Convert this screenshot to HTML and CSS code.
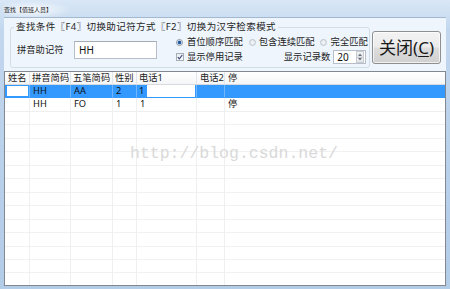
FILE: index.html
```html
<!DOCTYPE html>
<html lang="zh-CN">
<head>
<meta charset="utf-8">
<title>查找【值班人员】</title>
<link rel="stylesheet" href="styles.css">
</head>
<body>
<div class="window">
  <div class="titlebar"><span class="title">查找【值班人员】</span></div>
  <div class="client">
    <div class="top">
      <fieldset class="group">
        <legend>查找条件〖F4〗切换助记符方式〖F2〗切换为汉字检索模式</legend>
        <div class="group-body">
          <span class="lbl">拼音助记符</span>
          <div class="textbox">HH</div>
          <div class="options">
            <div class="opt-row">
              <span class="radio on"></span><span class="txt t1">首位顺序匹配</span>
              <span class="radio r2"></span><span class="txt t2">包含连续匹配</span>
              <span class="radio r3"></span><span class="txt t3">完全匹配</span>
            </div>
            <div class="opt-row">
              <span class="check"><svg width="6" height="6" viewBox="0 0 6 6"><polyline points="0.8,3.2 2.3,4.8 5.3,1" fill="none" stroke="#34467a" stroke-width="1.1"/></svg></span><span class="txt t1">显示停用记录</span>
              <span class="txt count-lbl">显示记录数</span>
              <div class="spin">
                <span class="spin-val">20</span>
                <div class="spin-btns">
                  <span class="sb"><svg width="4" height="3" viewBox="0 0 4 3"><polygon points="0,3 2,0.5 4,3" fill="#6b7582"/></svg></span>
                  <span class="sb"><svg width="4" height="3" viewBox="0 0 4 3"><polygon points="0,0 4,0 2,2.5" fill="#6b7582"/></svg></span>
                </div>
              </div>
            </div>
          </div>
        </div>
      </fieldset>
      <button class="close">关闭(<u>C</u>)</button>
    </div>
    <div class="grid">
      <div class="row head">
        <span class="c">姓名</span><span class="c">拼音简码</span><span class="c">五笔简码</span><span class="c">性别</span><span class="c">电话1</span><span class="c">电话2</span><span class="c last">停</span>
      </div>
      <div class="row sel">
        <span class="c"><span class="editor e1"></span></span><span class="c">HH</span><span class="c">AA</span><span class="c">2</span><span class="c ed">1<span class="editor e2"></span></span><span class="c"></span><span class="c last"></span>
      </div>
      <div class="row">
        <span class="c"></span><span class="c">HH</span><span class="c">FO</span><span class="c">1</span><span class="c">1</span><span class="c"></span><span class="c last">停</span>
      </div>
      <div class="row filler">
        <span class="c"></span><span class="c"></span><span class="c"></span><span class="c"></span><span class="c"></span><span class="c"></span><span class="c last"></span>
      </div>
      <div class="watermark">http://blog.csdn.net/</div>
    </div>
  </div>
</div>
</body>
</html>
```

FILE: styles.css
```css
html, body {
  margin: 0;
  padding: 0;
}

body {
  width: 450px;
  height: 289px;
  overflow: hidden;
  font-family: "Noto Sans", "Noto Sans CJK SC", sans-serif;
  font-size: 9.3px;
  color: #1e1e1e;
}

.window {
  width: 450px;
  height: 289px;
  box-sizing: border-box;
  padding: 0 4px 3px 4px;
  background: linear-gradient(#d9e7f6, #c2d7ee 30px, #b7cfea 200px, #b3cce8);
  display: flex;
  flex-direction: column;
}

.titlebar {
  height: 17px;
  flex: none;
  display: flex;
  align-items: center;
  padding-top: 3px;
  box-sizing: border-box;
  background: radial-gradient(ellipse 40px 9px at 28px 10px, rgba(255,255,255,0.85), rgba(255,255,255,0));
}

.title {
  font-size: 6px;
  line-height: 8px;
  color: #1a1a1a;
}

.client {
  flex: 1;
  display: flex;
  flex-direction: column;
  background: #eef5fc;
  border-top: 1px solid #a4b8cf;
  min-height: 0;
}

.top {
  display: flex;
  align-items: flex-start;
  padding-top: 3px;
  flex: none;
}

.group {
  margin: 0 0 0 6px;
  padding: 0;
  width: 360px;
  box-sizing: border-box;
  border: 1px solid #d3dde6;
  border-radius: 3px;
  min-width: 0;
}

.group legend {
  margin-left: 3px;
  padding: 0 2px;
  font-size: 9.5px;
  letter-spacing: 0.4px;
  line-height: 12px;
  color: #1e1e1e;
}

.group-body {
  display: flex;
  align-items: center;
  height: 28px;
  padding: 3px 0 3px 6px;
}

.lbl {
  width: 57px;
  flex: none;
  line-height: 12px;
}

.textbox {
  width: 83px;
  height: 18px;
  box-sizing: border-box;
  border: 1px solid #b6bfc9;
  border-top-color: #a3acb7;
  background: #fff;
  padding-left: 4px;
  font-size: 10px;
  line-height: 16px;
  color: #111;
  flex: none;
}

.options {
  margin-left: 19px;
  display: flex;
  flex-direction: column;
  gap: 2px;
}

.opt-row {
  display: flex;
  align-items: center;
  height: 12px;
  line-height: 12px;
}

.opt-row + .opt-row {
  height: 14px;
}

.radio {
  width: 7px;
  height: 7px;
  box-sizing: border-box;
  border-radius: 50%;
  border: 1px solid #bcc4cc;
  background: radial-gradient(circle, #f4f6f8, #dde2e7);
  flex: none;
  position: relative;
}

.radio.on {
  border-color: #8e99a6;
  background: radial-gradient(circle, #1d4f93 0, #2a66b0 1.6px, #e6eaee 2.2px);
}

.txt {
  white-space: nowrap;
  flex: none;
}

.t1 { margin-left: 4px; }
.r2 { margin-left: 6px; }
.t2 { margin-left: 3px; }
.r3 { margin-left: 5px; }
.t3 { margin-left: 4px; }

.check {
  width: 8px;
  height: 8px;
  box-sizing: border-box;
  border: 1px solid #a6aeb8;
  background: linear-gradient(#e9ecef, #fbfbfb);
  display: flex;
  align-items: center;
  justify-content: center;
  flex: none;
}

.check + .t1 {
  margin-left: 3px;
}

.count-lbl {
  margin-left: 41px;
}

.spin {
  margin-left: 3px;
  width: 33px;
  height: 14px;
  box-sizing: border-box;
  border: 1px solid #b6bfc9;
  background: #fff;
  display: flex;
  flex: none;
}

.spin-val {
  flex: 1;
  padding-left: 3px;
  font-size: 10px;
  line-height: 12px;
  color: #111;
}

.spin-btns {
  width: 8px;
  display: flex;
  flex-direction: column;
  margin: 0 1px 0 0;
}

.sb {
  flex: 1;
  display: flex;
  align-items: center;
  justify-content: center;
  background: linear-gradient(#f4f4f4, #e2e4e7);
  border: 1px solid #c8ccd2;
  box-sizing: border-box;
}

.sb + .sb {
  border-top: none;
}

.close {
  margin: 10px 0 0 2px;
  width: 69px;
  height: 33px;
  padding: 0;
  box-sizing: border-box;
  border: 1px solid #8f8f8f;
  border-radius: 3px;
  background: linear-gradient(#f3f3f3 0%, #ebebeb 48%, #dddddd 52%, #d0d0d0 100%);
  box-shadow: inset 0 0 0 1px rgba(255,255,255,0.7);
  font-family: "Noto Sans", "Noto Sans CJK SC", sans-serif;
  font-size: 17px;
  line-height: 31px;
  color: #1a1a1a;
  flex: none;
}

.close u {
  text-decoration-thickness: 1px;
  text-underline-offset: 2px;
}

.grid {
  flex: 1;
  margin-top: 3px;
  border: 1px solid #828790;
  background: #fff;
  display: flex;
  flex-direction: column;
  position: relative;
  overflow: hidden;
  min-height: 0;
}

.row {
  display: grid;
  grid-template-columns: 25px 41px 42px 24px 60px 28px 1fr;
  height: 13.45px;
  flex: none;
}

.c {
  box-sizing: border-box;
  border-right: 1px solid #efefef;
  border-bottom: 1px solid #efefef;
  padding-left: 3px;
  line-height: 12.5px;
  white-space: nowrap;
  overflow: hidden;
  color: #111;
}

.c.last {
  border-right: none;
}

.head {
  height: 13px;
  background: linear-gradient(#ffffff, #f4f5f7);
}

.head .c {
  border-right-color: #e3e5e8;
  border-bottom-color: #d6d9dd;
  padding-left: 2px;
  line-height: 12px;
  color: #1e1e1e;
}

.head .c:first-child {
  padding-left: 3px;
}

.head .c:nth-child(6),
.head .c:nth-child(7) {
  padding-left: 3px;
}

.sel .c {
  background: #3399ff;
  border-right-color: #6fb6ff;
  border-bottom-color: #3399ff;
  color: #101010;
}

.sel .c:first-child {
  padding-left: 2px;
  display: flex;
  align-items: center;
}

.editor {
  display: block;
  background: #fff;
}

.e1 {
  width: 21px;
  height: 10px;
}

.sel .ed {
  display: flex;
  padding-left: 2px;
}

.e2 {
  margin-left: 3px;
  width: 48px;
  height: 12.5px;
}

.filler {
  flex: 1;
  height: auto;
}

.filler .c {
  border-bottom: none;
  background: repeating-linear-gradient(to bottom, transparent 0, transparent 12.45px, #f1f1f1 12.45px, #f1f1f1 13.45px);
}

.watermark {
  position: absolute;
  left: 125px;
  top: 73px;
  font-family: "Liberation Mono", monospace;
  font-size: 16.5px;
  line-height: 18px;
  color: #d9d9d9;
  white-space: nowrap;
}
```
